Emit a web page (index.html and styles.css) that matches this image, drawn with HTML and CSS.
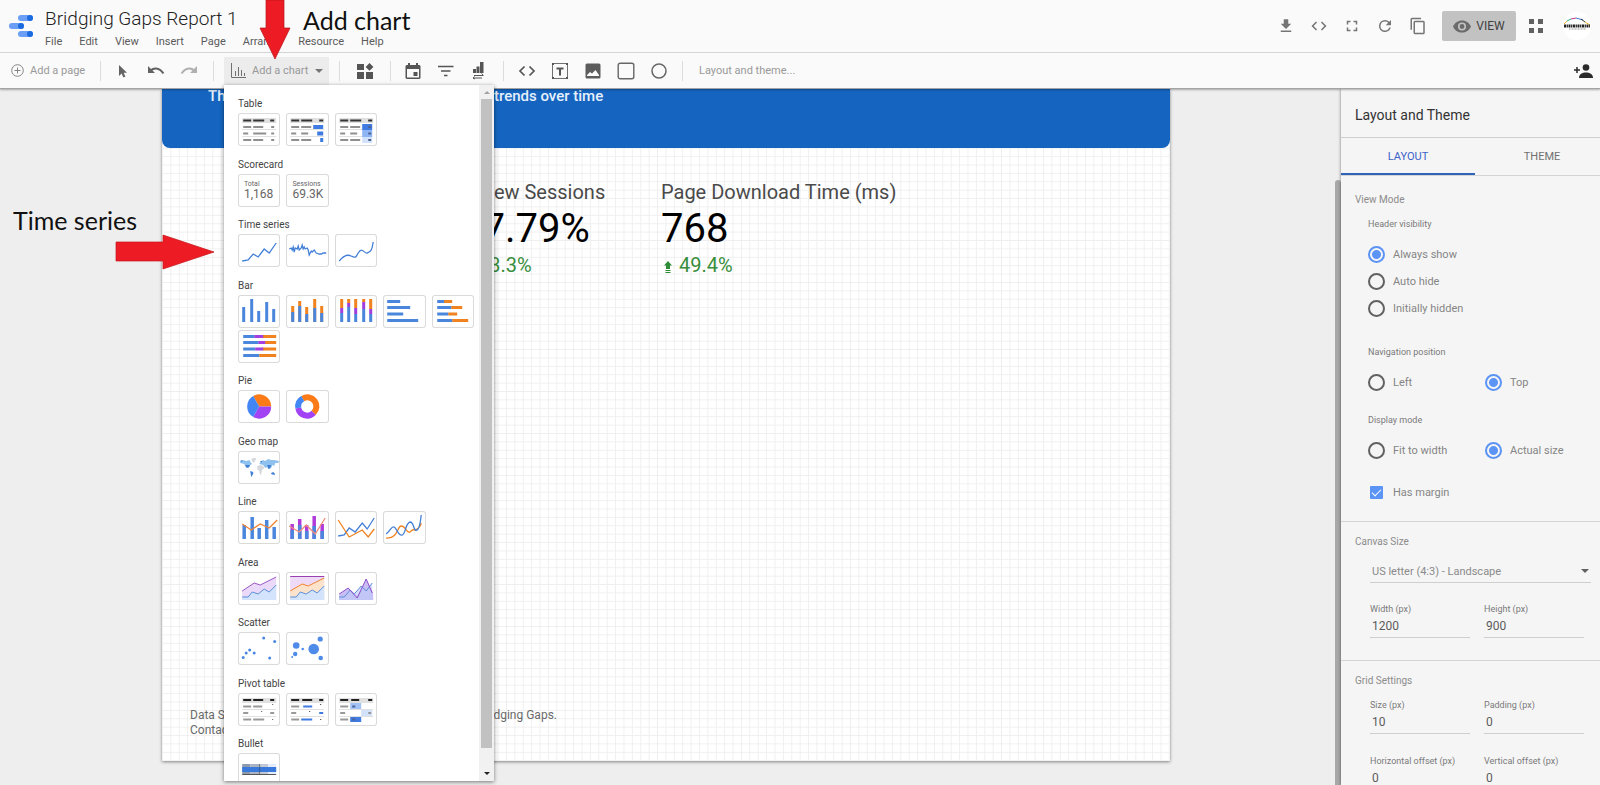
FILE: index.html
```html
<!DOCTYPE html>
<html lang="en">
<head>
<meta charset="utf-8">
<title>Bridging Gaps Report 1</title>
<link rel="stylesheet" href="styles.css">
</head>
<body>
<header class="topbar">
  <svg class="logo" viewBox="0 0 24 22"><g fill="#6a9ff5"><rect x="9" width="15" height="6" rx="3"/><rect y="8" width="15" height="6" rx="3"/><rect x="9" y="16" width="15" height="6" rx="3"/></g><g fill="#1b6be0"><circle cx="21" cy="3" r="3"/><circle cx="12" cy="11" r="3"/><circle cx="21" cy="19" r="3"/></g></svg>
  <div class="titles">
    <h1 class="doc-title">Bridging Gaps Report 1</h1>
    <nav class="menubar">
      <button>File</button><button>Edit</button><button>View</button><button>Insert</button><button>Page</button><button>Arrange</button><button>Resource</button><button>Help</button>
    </nav>
  </div>
  <div class="actions">
    <button class="icon" aria-label="Download"><svg viewBox="0 0 24 24"><path fill="#757575" d="M19 9h-4V3H9v6H5l7 7 7-7zM5 18v2h14v-2H5z"/></svg></button>
    <button class="icon" aria-label="Embed"><svg viewBox="0 0 24 24"><path fill="#757575" d="M9.4 16.6 4.8 12l4.600-4.600L8 6l-6 6 6 6 1.400-1.400zm5.200 0 4.600-4.600-4.600-4.600L16 6l6 6-6 6-1.400-1.400z"/></svg></button>
    <button class="icon" aria-label="Full screen"><svg viewBox="0 0 24 24"><path fill="#757575" d="M7 14H5v5h5v-2H7v-3zm-2-4h2V7h3V5H5v5zm12 7h-3v2h5v-5h-2v3zM14 5v2h3v3h2V5h-5z"/></svg></button>
    <button class="icon" aria-label="Refresh"><svg viewBox="0 0 24 24"><path fill="#757575" d="M17.650 6.350A7.960 7.960 0 0 0 12 4a8 8 0 1 0 7.730 10h-2.080A6 6 0 1 1 12 6c1.660 0 3.140.69 4.220 1.780L13 11h7V4l-2.350 2.350z"/></svg></button>
    <button class="icon" aria-label="Copy"><svg viewBox="0 0 24 24"><path fill="#757575" d="M16 1H4a2 2 0 0 0-2 2v14h2V3h12V1zm3 4H8a2 2 0 0 0-2 2v14c0 1.100.9 2 2 2h11a2 2 0 0 0 2-2V7a2 2 0 0 0-2-2zm0 16H8V7h11v14z"/></svg></button>
    <button class="view-btn"><svg viewBox="1 4 22 16"><path fill="#6b6b6b" d="M12 4.500C7 4.500 2.730 7.610 1 12c1.730 4.390 6 7.500 11 7.500s9.270-3.110 11-7.500c-1.730-4.390-6-7.500-11-7.500zM12 17a5 5 0 1 1 0-10 5 5 0 0 1 0 10zm0-8a3 3 0 1 0 0 6 3 3 0 0 0 0-6z"/></svg>VIEW</button>
    <button class="apps" aria-label="Apps"><svg viewBox="0 0 14 14"><g fill="#616161"><rect width="5" height="5"/><rect x="9" width="5" height="5"/><rect y="9" width="5" height="5"/><rect x="9" y="9" width="5" height="5"/></g></svg></button>
    <button class="avatar" aria-label="Account"><svg viewBox="0 0 28 28"><circle cx="14" cy="14" r="14" fill="#fff"/><g fill="none" stroke-width="1"><path stroke="#f2b632" d="M1 12 4 9"/><path stroke="#2fae7a" d="M4 9 8 7"/><path stroke="#c43a8c" d="m8 7 5-1"/><path stroke="#3a7bd0" d="m13 6 7 2"/><path stroke="#333" d="m18 7 4 3"/><path stroke="#f2b632" d="m22 10 5 3"/></g><path stroke="#222" stroke-width="3" stroke-dasharray="2 .6 1.300 .6" d="M1 14h26"/><path stroke="#999" stroke-dasharray="1 .5" d="M6 17h17"/></svg></button>
  </div>
</header>

<div class="toolbar">
  <button class="add-page"><svg viewBox="0 0 13 13"><g fill="none" stroke="#858585"><circle cx="6.500" cy="6.500" r="5.800"/><path d="M6.500 3.500v6M3.500 6.500h6"/></g></svg>Add a page</button>
  <span class="divider"></span>
  <div class="tools">
    <button class="tool" aria-label="Select"><svg viewBox="0 0 16 16"><path fill="#636363" d="M3 2v11l2.600-2.500 1.800 4 2-.9-1.800-3.900H11z"/></svg></button>
    <button class="tool" aria-label="Undo"><svg viewBox="0 0 16 16"><path fill="none" stroke="#636363" stroke-width="2" d="M1 8.500c3-4 9-4.500 13.500 2"/><path fill="#636363" d="M-1 3v7h7z"/></svg></button>
    <button class="tool" aria-label="Redo"><svg viewBox="0 0 16 16"><path fill="none" stroke="#b0b0b0" stroke-width="2" d="M13 8.500c-3-4-9-4.500-13.500 2"/><path fill="#b0b0b0" d="M15 3v7H8z"/></svg></button>
  </div>
  <span class="divider"></span>
  <div class="chart-wrap">
    <button class="add-chart" aria-expanded="true"><svg class="chart-ico" viewBox="0 0 15 15"><path fill="none" stroke="#707070" d="M.5 0v14.500H15M4.500 8v5M7.500 4v9M10.500 7v6M13.500 10v3"/></svg>Add a chart<svg class="caret" viewBox="0 0 8 4"><path fill="#757575" d="M0 0h8L4 4z"/></svg></button>
    <div class="chart-menu">
      <div class="chart-list">
        <section class="group"><h2>Table</h2><div class="cards">
          <button class="card" aria-label="Table"><svg viewBox="0 0 42 33"><path fill="#e0e0e0" d="M4 5h34v5H4z"/><path stroke="#e0e0e0" d="M4 16.500h34M4 23.500h34"/><path stroke="#333" stroke-width="2" d="M5 7.500h8M15 7.500h11M32 7.500h4"/><path stroke="#8f8f8f" stroke-width="2" d="M5 14h8M15 14h10M33 14h3M5 20.500h5M15 20.500h13M33 20.500h3M5 27h8M15 27h10M33 27h3"/></svg></button>
          <button class="card" aria-label="Table with bars"><svg viewBox="0 0 42 33"><path fill="#e0e0e0" d="M4 5h34v5H4z"/><path stroke="#e0e0e0" d="M4 16.500h34M4 23.500h34"/><path stroke="#333" stroke-width="2" d="M5 7.500h8M15 7.500h11M33 7.500h4"/><path stroke="#8f8f8f" stroke-width="2" d="M5 14h8M15 14h10M5 20.500h5M15 20.500h7M5 27h8M15 27h10"/><path stroke="#3f7be0" stroke-width="4" d="M27 14h10M31 20.500h6M34 27h3"/></svg></button>
          <button class="card" aria-label="Table with heatmap"><svg viewBox="0 0 42 33"><path fill="#e0e0e0" d="M4 5h34v5H4z"/><path stroke="#e0e0e0" d="M4 16.500h24M4 23.500h24"/><path stroke="#333" stroke-width="2" d="M5 7.500h8M15 7.500h11M33 7.500h4"/><path stroke="#8f8f8f" stroke-width="2" d="M5 14h8M15 14h10M5 20.500h5M15 20.500h7M5 27h8M15 27h10"/><path fill="#3f7be0" d="M27 11h10v6H27z"/><path fill="#8fb4f3" d="M27 17h10v7H27z"/><path fill="#d3e2fb" d="M27 24h10v6H27z"/><path stroke="#4c6593" stroke-width="2" d="M33 14h3M33 20.500h3M33 27h3"/></svg></button>
        </div></section>
        <section class="group"><h2>Scorecard</h2><div class="cards">
          <button class="card score"><small>Total</small><span>1,168</span></button>
          <button class="card score"><small>Sessions</small><span>69.3K</span></button>
        </div></section>
        <section class="group"><h2>Time series</h2><div class="cards">
          <button class="card" aria-label="Time series"><svg viewBox="0 0 42 33"><path fill="none" stroke="#4480d8" stroke-width="1.300" d="m4 27 6-1 5-6 5 3 6-8 5 4 7-10"/></svg></button>
          <button class="card" aria-label="Sparkline"><svg viewBox="0 0 42 33"><path fill="none" stroke="#4480d8" stroke-width="1.300" d="m3 15 2-1 1 2 1-3 1 5 1-4 2 1 1-3 1 4 2-2 1-3 1 4 1-2 1 2 2-1 1 2 1 5 2-4 1 1 2-2 2 3 3 1 2 0 2-1 3 0"/></svg></button>
          <button class="card" aria-label="Smoothed time series"><svg viewBox="0 0 42 33"><path fill="none" stroke="#4480d8" stroke-width="1.300" d="M4 27c4-5 8-7 12-5 5 2 4 2 7-3 4-7 6 1 9 0 4-1 5-4 6-11"/></svg></button>
        </div></section>
        <section class="group"><h2>Bar</h2><div class="cards">
          <button class="card" aria-label="Column"><svg viewBox="0 0 42 33"><path stroke="#4a87dc" stroke-width="3" d="M5.500 27V12M13.500 27V4M20.500 27V16M28.500 27V7M35.500 27V14"/></svg></button>
          <button class="card" aria-label="Stacked column"><svg viewBox="0 0 42 33"><path stroke="#f0831f" stroke-width="3" d="M6.500 27V11M13.500 27V6M20.500 27V12M28.500 27V4M35.500 27V11"/><path stroke="#4a87dc" stroke-width="3" d="M6.500 27V17M13.500 27V11M20.500 27V19M28.500 27V13M35.500 27V18"/></svg></button>
          <button class="card" aria-label="100% stacked column"><svg viewBox="0 0 42 33"><path stroke="#f0831f" stroke-width="3" d="M6.500 13V4M13.500 8V4M20.500 13V4M28.500 7V4M35.500 14V4"/><path stroke="#a13fe0" stroke-width="3" d="M6.500 18v-5M13.500 12V8M20.500 19v-6M28.500 14V7M35.500 19v-5"/><path stroke="#4a87dc" stroke-width="3" d="M6.500 27v-9M13.500 27V12M20.500 27v-8M28.500 27V14M35.500 27v-8"/></svg></button>
          <button class="card" aria-label="Bar"><svg viewBox="0 0 42 33"><path stroke="#4a87dc" stroke-width="3" d="M4 6.500h13M4 12.500h23M4 19h16M4 25.500h31"/></svg></button>
          <button class="card" aria-label="Stacked bar"><svg viewBox="0 0 42 33"><path stroke="#f0831f" stroke-width="3" d="M11 6.500h9M19 12.500h11M16 19h9M20 25.500h16"/><path stroke="#4a87dc" stroke-width="3" d="M5 6.500h7M5 12.500h14M5 19h11M5 25.500h15"/></svg></button>
          <button class="card" aria-label="100% stacked bar"><svg viewBox="0 0 42 33"><path stroke="#f0831f" stroke-width="3" d="M24 6.500h14M26 12.500h12M24 19h14M21 25.500h17"/><path stroke="#a13fe0" stroke-width="3" d="M16 6.500h9M20 12.500h7M17 19h8"/><path stroke="#4a87dc" stroke-width="3" d="M5 6.500h11M5 12.500h15M5 19h12M5 25.500h16"/></svg></button>
        </div></section>
        <section class="group"><h2>Pie</h2><div class="cards">
          <button class="card" aria-label="Pie"><svg viewBox="0 0 42 33"><path fill="#fa7b17" d="M21 16.500 15 6.100A12 12 0 0 1 33 16.500z"/><path fill="#a142f4" d="M21 16.500h12a12 12 0 0 1-18 10.400z"/><path fill="#4285f4" d="m21 16.500-6 10.400a12 12 0 0 1 0-20.800z"/></svg></button>
          <button class="card" aria-label="Doughnut"><svg viewBox="0 0 42 33"><g fill="none" stroke-width="6"><path stroke="#fa7b17" d="M16.500 8.700A9 9 0 0 1 27.400 22.900"/><path stroke="#a142f4" d="M27.400 22.900A9 9 0 0 1 12.100 18"/><path stroke="#4285f4" d="M12.100 18A9 9 0 0 1 16.500 8.700"/></g></svg></button>
        </div></section>
        <section class="group"><h2>Geo map</h2><div class="cards">
          <button class="card" aria-label="Geo map"><svg viewBox="0 0 42 33"><path fill="#8fc1ee" d="m2 10 3-1 3 1 3-1 2 3 1 1-2 1-1 2-3 1-2-4-4-1zM23 10l2-1 2 1 3-2 3 1 3 0 5 1-1 2-3 0-1 3-2-1-1 3-2 1-2-2-2 1-2-3-4-1z"/><path fill="#d5d8dc" d="m13 8 2-1 3 0-1 3-2 2-1-2zM19 15l3-1 3 1 1 2-2 2-1 4-1 1-1-4-2-2z"/><path fill="#3f7fd6" d="M7 14h5l-2 3-2-1zM12 20l3 1 0 2-2 3zM29 14l4 0-1 3-2 1zM33 22l2-1 2 2-1 1-3-1zM2 10l2-1 0 2zM22 10l2 0-1 2z"/></svg></button>
        </div></section>
        <section class="group"><h2>Line</h2><div class="cards">
          <button class="card" aria-label="Combo"><svg viewBox="0 0 42 33"><path stroke="#4a87dc" stroke-width="3.500" d="M6 28V14M14 28V6M21 28V17M28.500 28V9M36 28V16"/><path fill="none" stroke="#ee8434" stroke-width="1.300" d="m4 13 9 6 9-6 9 4 8-8"/></svg></button>
          <button class="card" aria-label="Stacked combo"><svg viewBox="0 0 42 33"><path stroke="#b03bd8" stroke-width="3.500" d="M6 28V13M13.500 28V8M20.500 28V14M28 28V5M36 28V13"/><path stroke="#4a87dc" stroke-width="3.500" d="M6 28v-9M13.500 28V14M20.500 28v-8M28 28V15M36 28v-8"/><path fill="none" stroke="#f08a7a" stroke-width="1.300" d="m3 15 10 6 7-7 9 9L39 7"/></svg></button>
          <button class="card" aria-label="Line"><svg viewBox="0 0 42 33"><path fill="none" stroke="#4480d8" stroke-width="1.300" d="m3 25 6-1 5-7 6 4 7-9 5 6 7-11"/><path fill="none" stroke="#f0831f" stroke-width="1.300" d="m3 9 11 17 13-7 6 7 6-8"/></svg></button>
          <button class="card" aria-label="Smoothed line"><svg viewBox="0 0 42 33"><path fill="none" stroke="#f0831f" stroke-width="1.300" d="M3 27c12 1 11-12 15-12 5 0 5 8 9 6 3-5 4 0 7-3 2-2 3-1 4-6"/><path fill="none" stroke="#4480d8" stroke-width="1.300" d="M3 23c5-4 5-8 8-7 3 2 4 9 8 8 4-2 3-12 8-13 4 0 3 10 7 8 3-3 3-7 4-15"/></svg></button>
        </div></section>
        <section class="group"><h2>Area</h2><div class="cards">
          <button class="card" aria-label="Stacked area"><svg viewBox="0 0 42 33"><path fill="#ead9f8" d="m4 19 12-8 6 2 16-8v23H4z"/><path fill="#d2e3fb" d="m4 25 6 0 4-5 6 2 6-5 5 3 7-7v15H4z"/><path fill="none" stroke="#9a57c8" d="m4 19 12-8 6 2 16-8"/><path fill="none" stroke="#5a8fd8" d="m4 25 6 0 4-5 6 2 6-5 5 3 7-7"/></svg></button>
          <button class="card" aria-label="100% stacked area"><svg viewBox="0 0 42 33"><path fill="#eed9f6" d="M4 4h34v24H4z"/><path fill="#fde3cb" d="m4 19 12-8 6 3 16-8v22H4z"/><path fill="#d2e3fb" d="m4 25 6 0 4-5 6 2 6-4 5 3 7-7v14H4z"/><path stroke="#9a3fb0" d="M4 4.500h34"/><path fill="none" stroke="#ee8434" d="m4 19 12-7 6 2 16-8"/><path fill="none" stroke="#5a8fd8" d="m4 25 6 0 4-5 6 2 6-4 5 3 7-7"/></svg></button>
          <button class="card" aria-label="Area"><svg viewBox="0 0 42 33"><path fill="#c9bff5" d="m4 22 9-6 9 8 9-17 7 14v7H4z"/><path fill="#bccbf8" fill-opacity=".6" d="m4 25 5 0 6-7 4 4 7-8 5 5 6-8v17H4z"/><path fill="none" stroke="#5a8fd8" d="m4 25 5 0 6-7 4 4 7-8 5 5 6-8"/><path fill="none" stroke="#8e4fc8" d="m4 22 9-6 9 10 9-19 6 14"/></svg></button>
        </div></section>
        <section class="group"><h2>Scatter</h2><div class="cards">
          <button class="card" aria-label="Scatter"><svg viewBox="0 0 42 33"><g fill="#4a87e0"><circle cx="5" cy="25.500" r="1.500"/><circle cx="8" cy="21" r="1.500"/><circle cx="11.500" cy="18" r="1.500"/><circle cx="16" cy="21" r="1.500"/><circle cx="25.500" cy="6" r="1.500"/><circle cx="36.500" cy="9.500" r="1.500"/><circle cx="31.500" cy="26" r="1.500"/></g></svg></button>
          <button class="card" aria-label="Bubble"><svg viewBox="0 0 42 33"><g fill="#4f8be8"><circle cx="10" cy="13.500" r="3.300"/><circle cx="9" cy="22" r="2.200"/><circle cx="6" cy="25" r="1"/><circle cx="16.500" cy="17" r="1.300"/><circle cx="27.500" cy="17" r="5.300"/><circle cx="34" cy="7" r="2.600"/><circle cx="34.500" cy="26" r="2.300"/></g></svg></button>
        </div></section>
        <section class="group"><h2>Pivot table</h2><div class="cards">
          <button class="card" aria-label="Pivot table"><svg viewBox="0 0 42 33"><path fill="#e0e0e0" d="M4 5h34v5H4z"/><path stroke="#e0e0e0" d="M4 16.500h34M4 23.500h34"/><path stroke="#222" stroke-width="2" d="M5 7h8M15 7h10M32 7h4"/><path stroke="#999" stroke-width="2" d="M5 13.500h8M15 13.500h9M5 20h5M32 20h4M5 26.500h8M15 26.500h11"/><path stroke="#555" d="M34 11.500h1M23 18.500h1M34 26.500h1"/></svg></button>
          <button class="card" aria-label="Pivot table with bars"><svg viewBox="0 0 42 33"><path fill="#e0e0e0" d="M4 5h34v5H4z"/><path stroke="#e0e0e0" d="M4 16.500h34M4 23.500h34"/><path stroke="#222" stroke-width="2" d="M5 7h8M16 7h10M33 7h4"/><path stroke="#999" stroke-width="2" d="M5 13.500h8M5 20h5M5 26.500h8"/><path stroke="#3f7be0" stroke-width="2" d="M17 13.500h9M33 20h4M15 26.500h11"/><path stroke="#333" d="M34 11.500h1M23 18.500h1M34 26.500h1"/></svg></button>
          <button class="card" aria-label="Pivot table with heatmap"><svg viewBox="0 0 42 33"><path fill="#e0e0e0" d="M4 5h34v5H4z"/><path stroke="#e0e0e0" d="M4 16.500h34M4 23.500h34"/><path fill="#a3c3f6" d="M15 10h11v6H15z"/><path fill="#d3e2fb" d="M26 17h11v6H26z"/><path fill="#3f7be0" d="M15 24h11v5H15z"/><path stroke="#222" stroke-width="2" d="M5 7h8M16 7h8M33 7h4"/><path stroke="#999" stroke-width="2" d="M5 13.500h8M5 20h5M33 20h3M5 26.500h8"/><path stroke="#4c6593" stroke-width="2" d="M17 13.500h3M17 26.500h3"/></svg></button>
        </div></section>
        <section class="group"><h2>Bullet</h2><div class="cards">
          <button class="card" aria-label="Bullet"><svg viewBox="0 0 42 33"><path fill="#8d99ac" d="M4 11h8v10H4z"/><path fill="#aab3c2" d="M12 11h10v10H12z"/><path fill="#c3c9d4" d="M22 11h8v10h-8z"/><path fill="#e3ecfa" d="M30 11h8v10h-8z"/><path fill="#3a79dc" d="M4 14h34v5H4z"/><path stroke="#345" stroke-width=".6" d="M21.500 11v10"/><path stroke="#555" d="M4 21.500h34"/></svg></button>
        </div></section>
      </div>
      <div class="menu-scroll"><svg viewBox="0 0 6 3"><path fill="#a3a3a3" d="m0 3 3-3 3 3z"/></svg><span class="menu-thumb"></span><svg viewBox="0 0 6 3"><path fill="#222" d="m0 0 3 3 3-3z"/></svg></div>
    </div>
  </div>
  <span class="divider"></span>
  <div class="tools wide">
    <button class="tool" aria-label="Community visualizations"><svg viewBox="0 0 16 16"><path fill="#555" d="M0 1h7v6H0zM0 9h7v7H0zM9 9h7v7H9zM12.500 0l3.900 3.900-3.900 3.900-3.900-3.900z"/></svg></button>
  </div>
  <span class="divider"></span>
  <div class="tools">
    <button class="tool" aria-label="Date range"><svg viewBox="1 0 16 16"><path fill="#555" d="M3 0h2v2h6V0h2v2h1.500l1 1v12l-1 1h-13l-1-1V3l1-1H3zM2 6v8.500h12V6z"/><path fill="#555" d="M8.500 9h4v4h-4z"/></svg></button>
    <button class="tool" aria-label="Filter control"><svg viewBox="1 0 16 16"><path stroke="#555" stroke-width="1.600" d="M0 3.500h15.500M3 8h9.500M6 12.500h3.500"/></svg></button>
    <button class="tool" aria-label="Data control"><svg viewBox="1 0 16 16"><path fill="#555" d="M2 6h3v4H2zM5.500 3.500h3V10h-3zM9-1h3.500v11H9z"/><path fill="none" stroke="#555" d="M3 12.500h9M10.500 10.500l2 2M2 15h9M3.500 13.500 2 15l2 1"/></svg></button>
  </div>
  <span class="divider"></span>
  <div class="tools">
    <button class="tool" aria-label="URL embed"><svg viewBox="0 0 16 16"><path fill="none" stroke="#555" stroke-width="1.700" d="M5.500 3.500 1 8l4.500 4.500M10.500 3.500 15 8l-4.500 4.500"/></svg></button>
    <button class="tool" aria-label="Text"><svg viewBox="0 0 16 16"><path fill="none" stroke="#707070" d="M.5.500h15v15H.5z"/><path fill="#555" d="M0 0h2v2H0zM14 0h2v2h-2zM0 14h2v2H0zM14 14h2v2h-2zM4.500 4.500h7v2h-2.500v6H7v-6H4.500z"/></svg></button>
    <button class="tool" aria-label="Image"><svg viewBox="0 0 16 16"><rect x=".5" y=".5" width="15" height="15" rx="1.500" fill="#5c5c5c"/><path fill="#fafafa" d="M2 13v-1l3-3 2 1.500L10.500 7l3.500 5v1z"/></svg></button>
    <button class="tool" aria-label="Rectangle"><svg viewBox="0 0 16 16"><rect x=".2" y=".2" width="15.600" height="15.600" rx="2" fill="none" stroke="#666" stroke-width="1.400"/></svg></button>
    <button class="tool" aria-label="Circle"><svg viewBox="0 0 16 16"><circle cx="8" cy="8" r="7" fill="none" stroke="#666" stroke-width="1.500"/></svg></button>
  </div>
  <span class="divider"></span>
  <button class="theme-btn">Layout and theme...</button>
  <button class="share" aria-label="Share"><svg viewBox="0 0 19 14"><circle cx="12" cy="3.500" r="3.300" fill="#2b2b2b"/><path fill="#2b2b2b" d="M5 14c0-4 3.500-5.500 7-5.500s7 1.500 7 5.500z"/><path stroke="#2b2b2b" stroke-width="1.500" d="M0 6h6M3 3v6"/></svg></button>
</div>

<div class="workspace">
  <main class="stage">
    <article class="canvas">
      <div class="banner"><span>Th</span><span>trends over time</span></div>
      <div class="scores">
        <div class="kpi"><p class="kpi-name">% New Sessions</p><p class="kpi-value">77.79%</p><p class="kpi-delta"><svg viewBox="0 0 8 12"><path fill="#2e8b37" d="m4 0 4 4.500H6V8H2V4.500H0zM1.500 9h5v1h-5zM1.500 11h5v1h-5z"/></svg>13.3%</p></div>
        <div class="kpi"><p class="kpi-name">Page Download Time (ms)</p><p class="kpi-value">768</p><p class="kpi-delta"><svg viewBox="0 0 8 12"><path fill="#2e8b37" d="m4 0 4 4.500H6V8H2V4.500H0zM1.500 9h5v1h-5zM1.500 11h5v1h-5z"/></svg>49.4%</p></div>
      </div>
      <footer class="credits"><p><span>Data S</span><span>Bridging Gaps.</span></p><p>Contac</p></footer>
    </article>
    <span class="side-thumb"></span>
  </main>
  <aside class="panel">
    <h2 class="panel-title">Layout and Theme</h2>
    <div class="tabs" role="tablist"><button role="tab" aria-selected="true" class="tab active">LAYOUT</button><button role="tab" aria-selected="false" class="tab">THEME</button></div>
    <form>
      <section class="block first">
        <h3>View Mode</h3>
        <fieldset class="options stacked"><legend>Header visibility</legend>
          <label><input type="radio" name="header" checked>Always show</label>
          <label><input type="radio" name="header">Auto hide</label>
          <label><input type="radio" name="header">Initially hidden</label>
        </fieldset>
        <fieldset class="options"><legend>Navigation position</legend>
          <label><input type="radio" name="nav">Left</label>
          <label><input type="radio" name="nav" checked>Top</label>
        </fieldset>
        <fieldset class="options"><legend>Display mode</legend>
          <label><input type="radio" name="display">Fit to width</label>
          <label><input type="radio" name="display" checked>Actual size</label>
        </fieldset>
        <label class="margin-check"><input type="checkbox" checked>Has margin</label>
      </section>
      <section class="block">
        <h3>Canvas Size</h3>
        <div class="select-wrap"><select aria-label="Canvas size"><option>US letter (4:3) - Landscape</option></select><svg viewBox="0 0 8 4"><path fill="#616161" d="M0 0h8L4 4z"/></svg></div>
        <div class="fields spaced">
          <label>Width (px)<input type="text" value="1200"></label>
          <label>Height (px)<input type="text" value="900"></label>
        </div>
      </section>
      <section class="block">
        <h3>Grid Settings</h3>
        <div class="fields">
          <label>Size (px)<input type="text" value="10"></label>
          <label>Padding (px)<input type="text" value="0"></label>
          <label>Horizontal offset (px)<input type="text" value="0"></label>
          <label>Vertical offset (px)<input type="text" value="0"></label>
        </div>
      </section>
    </form>
  </aside>
</div>

<p class="note note-add">Add chart</p>
<svg class="arrow-down" viewBox="0 0 32 60"><path fill="#ed1c24" stroke="#b5121b" stroke-width=".7" d="M7 0h18v28h6L16 59 1 28h6z"/></svg>
<p class="note note-time">Time series</p>
<svg class="arrow-right" viewBox="0 0 100 36"><path fill="#ed1c24" stroke="#c4151d" stroke-width=".7" d="M1 8h47V1l51 17-51 17v-8H1z"/></svg>
</body>
</html>
```

FILE: styles.css
```css
* { box-sizing: border-box; }
body { margin: 0; height: 100vh; display: flex; flex-direction: column; overflow: hidden; position: relative; font-family: Roboto, "Liberation Sans", sans-serif; background: #eee; color: #444; }
h1, h2, h3, p, fieldset, legend { margin: 0; padding: 0; border: 0; font-weight: 400; }
button, input, select { font: inherit; color: inherit; border: 0; background: none; padding: 0; margin: 0; }
svg { display: block; }

/* Top bar */
.topbar { display: flex; flex: none; height: 53px; padding: 0 9px; background: #fafafa; border-bottom: 1px solid #d9d9d9; }
.logo { width: 24px; height: 22px; margin-top: 15px; }
.titles { margin-left: 12px; padding-top: 7px; }
.doc-title { font-size: 19px; font-weight: 300; line-height: 24px; color: #222; }
.menubar { display: flex; gap: 17px; margin-top: 2px; font-size: 11px; line-height: 18px; color: #5a5a5a; }
.actions { display: flex; align-items: center; margin-left: auto; }
.icon { width: 18px; margin-right: 15px; }
.icon svg { width: 18px; height: 18px; }
.view-btn { display: flex; align-items: center; justify-content: center; gap: 5px; width: 74px; height: 30px; border-radius: 2px; background: #c2c2c2; font-size: 12px; color: #404040; }
.view-btn svg { width: 18px; height: 13px; }
.apps { margin-left: 13px; }
.apps svg { width: 14px; height: 14px; }
.avatar { margin-left: 20px; }
.avatar svg { width: 28px; height: 28px; }

/* Toolbar */
.toolbar { display: flex; align-items: center; flex: none; height: 36px; padding: 0 7px 0 11px; background: #fafafa; border-bottom: 1px solid #a3a3a3; box-shadow: 0 1px 2px rgba(0,0,0,.3); position: relative; z-index: 2; font-size: 11px; color: #999; }
.divider { width: 1px; height: 20px; background: #dcdcdc; }
.add-page { display: flex; align-items: center; gap: 6px; width: 89px; white-space: nowrap; }
.add-page svg { width: 13px; height: 13px; }
.tools { display: flex; gap: 17px; padding: 0 15px; }
.tools.wide { padding: 0 17px; }
.tool svg { width: 16px; height: 16px; overflow: visible; }
.chart-wrap { position: relative; margin: 0 10px; align-self: stretch; display: flex; align-items: center; }
.add-chart { display: flex; align-items: center; width: 105px; height: 28px; padding: 0 6px 0 7px; background: #ececec; white-space: nowrap; }
.chart-ico { width: 15px; height: 15px; margin-right: 6px; }
.caret { width: 8px; height: 4px; margin-left: auto; }
.theme-btn { margin-left: 16px; font-size: 11px; }
.share { margin-left: auto; }
.share svg { width: 19px; height: 14px; }

/* Chart picker */
.chart-menu { position: absolute; top: 32px; left: 0; display: flex; width: 270px; height: calc(100vh - 89px); background: #fff; box-shadow: 0 1px 4px rgba(0,0,0,.5); color: #444; overflow: hidden; }
.chart-list { flex: 1; padding: 10px 5px 0 14px; overflow: hidden; }
.group { padding-bottom: 9px; }
.group:nth-child(odd) { padding-bottom: 10px; }
.group h2 { font-size: 10px; line-height: 18px; }
.cards { display: grid; grid-template-columns: repeat(5, 1fr); gap: 2px 6px; }
.card { height: 33px; border-radius: 3px; box-shadow: inset 0 0 0 1px #dadada; overflow: hidden; }
.card svg { width: 100%; height: 33px; }
.score { display: flex; flex-direction: column; justify-content: center; padding-left: 6px; color: #666; text-align: left; }
.score small { font-size: 7px; line-height: 8px; }
.score span { font-size: 12px; line-height: 13px; }
.menu-scroll { display: flex; flex-direction: column; align-items: center; width: 15px; padding: 6px 0; background: #f1f1f1; }
.menu-scroll svg { width: 6px; height: 3px; }
.menu-thumb { flex: 1; width: 11px; margin: 5px 0 24px; background: #c1c1c1; }

/* Workspace */
.workspace { display: flex; flex: 1; min-height: 0; }
.stage { flex: 1; position: relative; padding: 0 171px 24px 162px; }
.canvas { display: flex; flex-direction: column; height: 100%; background-color: #fff; background-image: linear-gradient(90deg, #efefef 1px, transparent 1px), linear-gradient(#efefef 1px, transparent 1px); background-size: calc(100% / 120) calc(100% / 80); box-shadow: 0 1px 3px rgba(0,0,0,.45); }
.banner { display: grid; grid-template-columns: 286px auto; height: 59px; padding-left: 46px; border-radius: 0 0 8px 8px; background: #1565c0; color: #e6f0fb; font-size: 15px; font-weight: 500; line-height: 15px; }
.scores { display: grid; grid-template-columns: 201px auto; padding: 30px 0 0 298px; }
.kpi { white-space: nowrap; }
.kpi-name { font-size: 20px; line-height: 28px; color: #4a4a4a; }
.kpi-value { font-size: 40px; line-height: 46px; color: #000; }
.kpi-delta { display: flex; align-items: center; gap: 7px; padding-left: 3px; font-size: 20px; line-height: 26px; color: #388e3c; }
.kpi-delta svg { width: 8px; height: 12px; margin-top: 4px; }
.credits { width: 395px; margin-top: auto; padding: 0 0 23px 28px; font-size: 12px; line-height: 15px; color: #6a6a6a; }
.credits p { display: flex; justify-content: space-between; }
.side-thumb { position: absolute; right: 0; top: 91px; bottom: 0; width: 6px; background: #a8a8a8; border-radius: 3px 3px 0 0; }

/* Side panel */
.panel { width: 259px; overflow: hidden; background: #f5f5f5; color: #7a7a7a; box-shadow: 0 0 3px rgba(0,0,0,.5); position: relative; }
.panel-title { padding: 0 14px; font-size: 14px; line-height: 52px; height: 49px; border-bottom: 1px solid #cfcfcf; color: #333; }
.tabs { display: flex; height: 38px; border-bottom: 1px solid #d4d4d4; }
.tab { flex: none; width: 134px; font-size: 11px; color: #707070; }
.tab.active { color: #3c63c8; box-shadow: inset 0 -2px #2f62b9; }
.block { padding: 12px 9px 22px 29px; border-bottom: 1px solid #d4d4d4; }
.block.first { padding: 16px 9px 15px 27px; }
.block h3 { font-size: 10px; line-height: 16px; margin-left: -15px; color: #8c8c8c; }
.block.first h3 { margin-left: -13px; }
.options { display: grid; grid-template-columns: 117px 1fr; margin-top: 16px; }
.options.stacked { grid-template-columns: 1fr; margin: 8px 0 22px; }
.options legend { font-size: 9px; line-height: 16px; margin-bottom: 9px; }
.options label, .margin-check { display: flex; align-items: center; gap: 8px; height: 27px; font-size: 11px; color: #858585; }
.margin-check { margin-top: 15px; }
input[type=radio] { appearance: none; width: 17px; height: 17px; border: 2px solid #616161; border-radius: 50%; }
input[type=radio]:checked { border-color: #5b94f5; background: radial-gradient(circle, #5b94f5 4px, transparent 5px); }
input[type=checkbox] { appearance: none; width: 13px; height: 13px; margin: 2px; border-radius: 1px; background: #5b94f5; display: grid; place-items: center; }
input[type=checkbox]::after { content: ""; width: 8px; height: 4px; border: solid #fff; border-width: 0 0 1px 1px; transform: rotate(-45deg); margin-bottom: 2px; }
.select-wrap { display: grid; align-items: center; margin-top: 10px; border-bottom: 1px solid #cfcfcf; }
.select-wrap select { grid-area: 1 / 1; appearance: none; width: 100%; height: 22px; padding-left: 2px; font-size: 11px; color: #8a8a8a; }
.select-wrap svg { grid-area: 1 / 1; justify-self: end; width: 8px; height: 4px; margin-right: 2px; }
.fields { display: grid; grid-template-columns: 1fr 1fr; gap: 19px 14px; padding-right: 7px; margin-top: 8px; font-size: 9px; line-height: 16px; }
.fields.spaced { margin-top: 18px; }
.fields input { display: block; width: 100%; height: 21px; padding: 0 2px 2px; border-bottom: 1px solid #cfcfcf; font-size: 12px; color: #5c5c5c; }

/* Callouts over the page */
.note { position: absolute; z-index: 3; font-family: Lato, sans-serif; font-size: 25px; line-height: 28px; color: #111; }
.note-add { left: 303px; top: 6px; }
.note-time { left: 13px; top: 206px; }
.arrow-down { position: absolute; z-index: 3; left: 259px; top: 0; width: 32px; height: 60px; }
.arrow-right { position: absolute; z-index: 1; left: 115px; top: 234px; width: 100px; height: 36px; }
```
